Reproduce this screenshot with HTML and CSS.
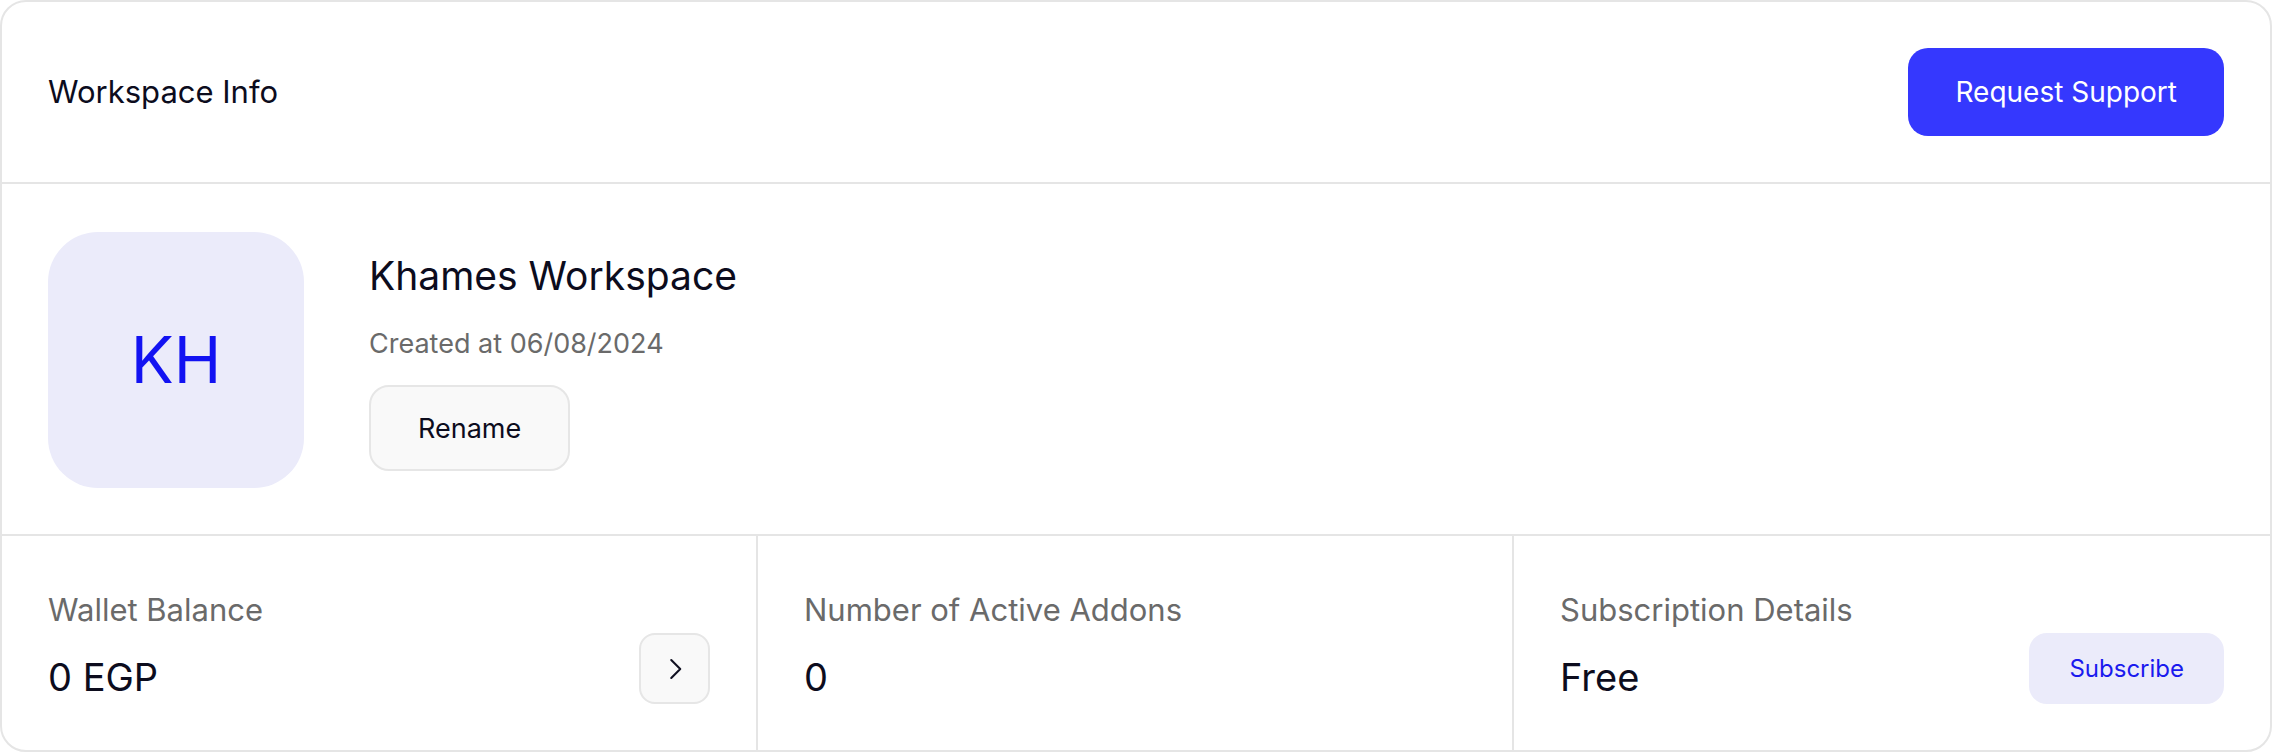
FILE: index.html
```html
<!DOCTYPE html>
<html lang="en">
<head>
<meta charset="utf-8">
<title>Workspace Info</title>
<link rel="stylesheet" href="styles.css">
</head>
<body>
<section class="card">
  <header class="card-header">
    <h2 class="card-title">Workspace Info</h2>
    <button class="btn btn-primary" type="button">Request Support</button>
  </header>

  <div class="workspace">
    <div class="avatar">KH</div>
    <div class="workspace-info">
      <h3 class="workspace-name">Khames Workspace</h3>
      <p class="workspace-date">Created at 06/08/2024</p>
      <button class="btn btn-outline" type="button">Rename</button>
    </div>
  </div>

  <div class="stats">
    <div class="stat">
      <div class="stat-label">Wallet Balance</div>
      <div class="stat-row">
        <div class="stat-value">0 EGP</div>
        <button class="btn btn-icon" type="button" aria-label="Open wallet">
          <svg viewBox="0 0 24 24" width="36" height="36" fill="none" stroke="currentColor" stroke-width="1.4" stroke-linecap="round" stroke-linejoin="round"><path d="M9.5 6l6 6-6 6"/></svg>
        </button>
      </div>
    </div>
    <div class="stat">
      <div class="stat-label">Number of Active Addons</div>
      <div class="stat-row">
        <div class="stat-value">0</div>
      </div>
    </div>
    <div class="stat">
      <div class="stat-label">Subscription Details</div>
      <div class="stat-row">
        <div class="stat-value">Free</div>
        <button class="btn btn-soft" type="button">Subscribe</button>
      </div>
    </div>
  </div>
</section>
</body>
</html>
```

FILE: styles.css
```css
* {
  box-sizing: border-box;
}

html,
body {
  margin: 0;
  background: #ffffff;
}

body {
  font-family: Inter, "Noto Sans", "Liberation Sans", sans-serif;
  color: #0c0c1d;
}

.card {
  width: 2272px;
  height: 752px;
  border: 2px solid #e5e5e5;
  border-radius: 26px;
  overflow: hidden;
  background: #ffffff;
}

/* header */
.card-header {
  display: flex;
  align-items: center;
  justify-content: space-between;
  padding: 46px;
  border-bottom: 2px solid #e5e5e5;
}

.card-title {
  margin: 0;
  font-size: 31px;
  line-height: 36px;
  font-weight: 400;
  color: #0c0c1d;
}

/* buttons */
.btn {
  font-family: inherit;
  cursor: pointer;
  border: none;
  display: inline-flex;
  align-items: center;
  justify-content: center;
}

.btn-primary {
  height: 88px;
  padding: 0 47px;
  border-radius: 20px;
  background: #3538fe;
  color: #ffffff;
  font-size: 28px;
}

.btn-outline {
  height: 86px;
  padding: 0 47px;
  border: 2px solid #e6e6e6;
  border-radius: 20px;
  background: #f9f9f9;
  color: #0c0c1d;
  font-size: 27px;
}

.btn-icon {
  width: 71px;
  height: 71px;
  padding: 0;
  border: 2px solid #e6e6e6;
  border-radius: 16px;
  background: #f9f9f9;
  color: #111122;
}

.btn-soft {
  height: 71px;
  padding: 0 40px;
  border-radius: 18px;
  background: #ebebfa;
  color: #1a1aee;
  font-size: 24px;
}

/* workspace summary */
.workspace {
  display: flex;
  align-items: flex-start;
  gap: 65px;
  padding: 48px 46px 46px;
  border-bottom: 2px solid #e5e5e5;
}

.avatar {
  width: 256px;
  height: 256px;
  flex: none;
  display: flex;
  align-items: center;
  justify-content: center;
  border-radius: 50px;
  background: #ebebfa;
  color: #1212f2;
  font-size: 64px;
  line-height: 1;
}

.workspace-info {
  display: flex;
  flex-direction: column;
  align-items: flex-start;
  margin-top: 21px;
}

.workspace-name {
  margin: 0;
  font-size: 39px;
  line-height: 46px;
  font-weight: 400;
}

.workspace-date {
  margin: 29px 0 25px;
  font-size: 27px;
  line-height: 32px;
  color: #6a6a6a;
}

/* stats */
.stats {
  display: grid;
  grid-template-columns: repeat(3, 1fr);
}

.stat {
  padding: 55px 46px 46px;
  border-right: 2px solid #e5e5e5;
}

.stat:last-child {
  border-right: none;
}

.stat-label {
  font-size: 31px;
  line-height: 38px;
  color: #6a6a6a;
  margin-bottom: 4px;
}

.stat-row {
  display: flex;
  align-items: flex-end;
  justify-content: space-between;
  min-height: 71px;
}

.stat-value {
  font-size: 38px;
  line-height: 54px;
  color: #0c0c1d;
}
```
